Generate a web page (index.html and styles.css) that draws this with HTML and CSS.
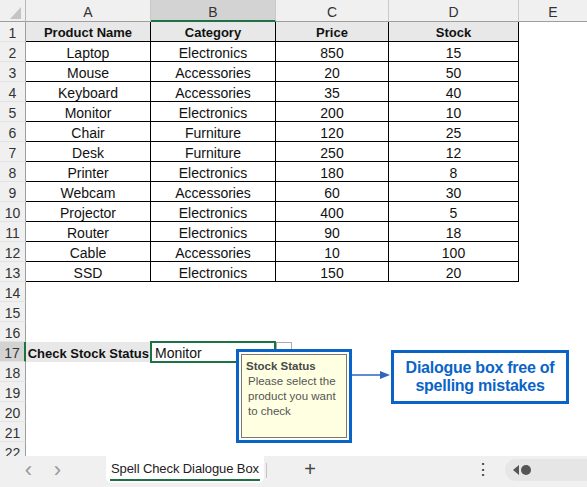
FILE: index.html
```html
<!DOCTYPE html>
<html>
<head>
<meta charset="utf-8">
<link rel="stylesheet" href="styles.css">
</head>
<body>
<div class="app">
  <div class="sheet">
    <div class="grid">
      <div class="corner"><svg width="26" height="22" viewBox="0 0 26 22"><polygon points="10,19 21,19 21,7" fill="#c4c4c4"/></svg></div>
      <div class="ch">A</div><div class="ch active">B</div><div class="ch">C</div><div class="ch">D</div><div class="ch last">E</div>

      <div class="rh">1</div><div class="c t th">Product Name</div><div class="c t th">Category</div><div class="c t th">Price</div><div class="c t th">Stock</div><div class="c"></div>
      <div class="rh">2</div><div class="c t">Laptop</div><div class="c t">Electronics</div><div class="c t">850</div><div class="c t">15</div><div class="c"></div>
      <div class="rh">3</div><div class="c t">Mouse</div><div class="c t">Accessories</div><div class="c t">20</div><div class="c t">50</div><div class="c"></div>
      <div class="rh">4</div><div class="c t">Keyboard</div><div class="c t">Accessories</div><div class="c t">35</div><div class="c t">40</div><div class="c"></div>
      <div class="rh">5</div><div class="c t">Monitor</div><div class="c t">Electronics</div><div class="c t">200</div><div class="c t">10</div><div class="c"></div>
      <div class="rh">6</div><div class="c t">Chair</div><div class="c t">Furniture</div><div class="c t">120</div><div class="c t">25</div><div class="c"></div>
      <div class="rh">7</div><div class="c t">Desk</div><div class="c t">Furniture</div><div class="c t">250</div><div class="c t">12</div><div class="c"></div>
      <div class="rh">8</div><div class="c t">Printer</div><div class="c t">Electronics</div><div class="c t">180</div><div class="c t">8</div><div class="c"></div>
      <div class="rh">9</div><div class="c t">Webcam</div><div class="c t">Accessories</div><div class="c t">60</div><div class="c t">30</div><div class="c"></div>
      <div class="rh">10</div><div class="c t">Projector</div><div class="c t">Electronics</div><div class="c t">400</div><div class="c t">5</div><div class="c"></div>
      <div class="rh">11</div><div class="c t">Router</div><div class="c t">Electronics</div><div class="c t">90</div><div class="c t">18</div><div class="c"></div>
      <div class="rh">12</div><div class="c t">Cable</div><div class="c t">Accessories</div><div class="c t">10</div><div class="c t">100</div><div class="c"></div>
      <div class="rh">13</div><div class="c t">SSD</div><div class="c t">Electronics</div><div class="c t">150</div><div class="c t">20</div><div class="c"></div>
      <div class="rh">14</div><div class="c"></div><div class="c"></div><div class="c"></div><div class="c"></div><div class="c"></div>
      <div class="rh">15</div><div class="c"></div><div class="c"></div><div class="c"></div><div class="c"></div><div class="c"></div>
      <div class="rh">16</div><div class="c"></div><div class="c"></div><div class="c"></div><div class="c"></div><div class="c"></div>
      <div class="rh active">17</div><div class="c lbl">Check Stock Status</div><div class="c sel">Monitor<span class="dd"><svg width="8" height="5" viewBox="0 0 8 5"><polygon points="1,0 7,0 4,4" fill="#444"/></svg></span></div><div class="c"></div><div class="c"></div><div class="c"></div>
      <div class="rh">18</div><div class="c"></div><div class="c"></div><div class="c"></div><div class="c"></div><div class="c"></div>
      <div class="rh">19</div><div class="c"></div><div class="c"></div><div class="c"></div><div class="c"></div><div class="c"></div>
      <div class="rh">20</div><div class="c"></div><div class="c"></div><div class="c"></div><div class="c"></div><div class="c"></div>
      <div class="rh">21</div><div class="c"></div><div class="c"></div><div class="c"></div><div class="c"></div><div class="c"></div>
      <div class="rh">22</div><div class="c"></div><div class="c"></div><div class="c"></div><div class="c"></div><div class="c"></div>
    </div>

    <div class="tip">
      <div class="tip-inner">
        <div class="tip-title">Stock Status</div>
        <div class="tip-body">Please select the product you want to check</div>
      </div>
    </div>
    <svg class="arrow" width="40" height="12" viewBox="0 0 40 12"><line x1="0" y1="6" x2="30" y2="6" stroke="#2f64c0" stroke-width="1.5"/><polygon points="28,2 38,6 28,10" fill="#2f64c0"/></svg>
    <div class="callout">Dialogue box free of<br>spelling mistakes</div>
  </div>

  <div class="tabbar">
    <span class="nav">&#x2039;</span>
    <span class="nav">&#x203A;</span>
    <div class="tab"><span class="tab-label">Spell Check Dialogue Box</span></div>
    <span class="sep"></span>
    <span class="plus">+</span>
    <span class="spacer"></span>
    <span class="more">&#x22EE;</span>
    <div class="scroll"><svg width="30" height="12" viewBox="0 0 30 12"><polygon points="10,1 10,11 4,6" fill="#555"/><circle cx="17" cy="6" r="5" fill="#555"/></svg></div>
  </div>
</div>
</body>
</html>
```

FILE: styles.css
```css
* { box-sizing: border-box; }
html, body { margin: 0; padding: 0; background: #fff; }
body { width: 587px; height: 487px; overflow: hidden; font-family: "Liberation Sans", Arial, sans-serif; }
.app { display: flex; flex-direction: column; height: 487px; }
.sheet { position: relative; height: 456px; overflow: hidden; }

.grid {
  display: grid;
  grid-template-columns: 26px 125px 125px 113px 130px 68px;
  grid-template-rows: 22px;
  grid-auto-rows: 20px;
}
.corner { background: #f0f0f0; border-right: 1px solid #b8b8b8; border-bottom: 1px solid #9e9e9e; }
.corner svg { display: block; }
.ch {
  background: #f0f0f0; border-right: 1px solid #c9c9c9; border-bottom: 1px solid #9e9e9e;
  font-size: 14px; color: #333; display: flex; align-items: center; justify-content: center; padding-top: 3px;
}
.ch.active { background: #d3d3d3; border-bottom: 2px solid #1e7145; }
.ch.last { border-right: none; }
.rh {
  background: #f0f0f0; border-right: 1px solid #9e9e9e; border-bottom: 1px solid #e3e3e3;
  font-size: 14px; color: #333; display: flex; align-items: center; justify-content: center; padding-top: 2px;
}
.rh.active { background: #d3d3d3; border-right: 2px solid #1e7145; }
.c { font-size: 14px; color: #111; display: flex; align-items: center; justify-content: center; white-space: nowrap; position: relative; padding-top: 2px; }
.c.t { border-right: 1px solid #000; border-bottom: 1px solid #000; }
.c.th { background: #e8e8e8; font-weight: bold; font-size: 13px; color: #111; }
.c.lbl { background: #e8e8e8; font-weight: bold; font-size: 13px; justify-content: flex-end; padding-right: 2px; }
.c.sel { border: 2px solid #1e7145; justify-content: flex-start; padding-left: 3px; padding-top: 1px; margin: -1px 0 -1px -1px; }
.dd {
  position: absolute; right: -18px; top: -1px; width: 16px; height: 16px;
  background: #fff; border: 1px solid #aaa; display: flex; align-items: flex-end; justify-content: center; padding-bottom: 2px;
}

.tip {
  position: absolute; left: 236px; top: 349px; width: 116px; height: 94px;
  border: 3px solid #0a64c8; background: #fff; padding: 2px;
}
.tip-inner {
  height: 100%; background: #ffffe1; border: 1px solid #777;
  padding: 4px 4px 0 4px; color: #555; font-size: 11.5px; line-height: 15px;
}
.tip-title { font-weight: bold; color: #4a4a4a; }
.tip-body { padding-left: 2px; }

.arrow { position: absolute; left: 352px; top: 369px; }
.callout {
  position: absolute; left: 391px; top: 350px; width: 178px; height: 54px;
  border: 3px solid #0a64c8; background: #fff; color: #0a64c8;
  font-weight: bold; font-size: 16px; letter-spacing: -0.25px; line-height: 18px;
  display: flex; align-items: center; justify-content: center; text-align: center;
}

.tabbar {
  height: 31px; background: #f0f0f0; display: flex; align-items: flex-start;
  font-family: "Liberation Sans", Arial, sans-serif;
}
.nav { width: 29px; height: 27px; display: flex; align-items: center; justify-content: center; color: #9a9a9a; font-size: 22px; margin-left: 0; }
.nav:first-child { margin-left: 14px; }
.tab {
  margin-left: 34px; width: 158px; height: 27px; background: #fff; border-radius: 0 0 6px 6px;
  display: flex; align-items: flex-start; justify-content: center;
}
.tab-label {
  margin-top: 5px; font-size: 13px; color: #222; letter-spacing: -0.1px;
  padding-bottom: 3px; border-bottom: 2px solid #1e7145; padding-left: 1px; padding-right: 1px;
}
.sep { width: 1px; height: 15px; background: #c4c4c4; margin: 7px 0 0 2px; }
.plus { margin-left: 36px; width: 14px; height: 27px; display: flex; align-items: center; justify-content: center; font-size: 20px; color: #444; font-weight: 300; }
.spacer { flex: 1; }
.more { height: 27px; display: flex; align-items: center; font-size: 16px; color: #333; margin-right: 14px; }
.scroll { width: 82px; height: 22px; margin-top: 3px; background: #e6e6e6; border-radius: 11px 0 0 11px; display: flex; align-items: center; padding-left: 4px; }
.scroll svg { display: block; }
```
